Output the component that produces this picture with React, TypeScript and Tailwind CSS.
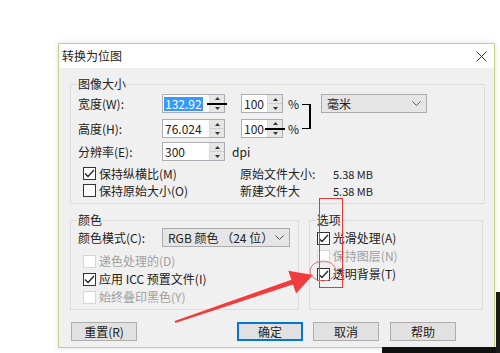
import React from 'react';

const Arrows: React.FC<{ dark?: boolean }> = ({ dark }) => (
    <div className="relative flex w-[15px] flex-col border-l border-[#d9d9d9] bg-[#e6e6e6]">
        <div className="flex flex-1 items-center justify-center">
            <svg width="5" height="3" viewBox="0 0 5 3"><path d="M0 3 L2.5 0 L5 3 Z" fill="#333" /></svg>
        </div>
        <div className={dark ? 'h-[2px] bg-black -mx-[3px]' : 'h-px bg-[#cfcfcf]'} />
        <div className="flex flex-1 items-center justify-center">
            <svg width="5" height="3" viewBox="0 0 5 3"><path d="M0 0 L2.5 3 L5 0 Z" fill="#333" /></svg>
        </div>
    </div>
);

const Spin: React.FC<{ value: string; className: string; selected?: boolean; dark?: boolean }> = ({ value, className, selected, dark }) => (
    <div className={`flex h-[19px] border border-[#abadb3] bg-white ${className}`}>
        <div className="flex flex-1 items-center pl-[1px]">
            <span className={selected ? 'bg-[#3399ff] px-[1px] text-white leading-[14px]' : 'px-[1px] leading-[14px]'}>{value}</span>
        </div>
        <Arrows dark={dark} />
    </div>
);

const Chevron = () => (
    <svg width="9" height="5" viewBox="0 0 9 5"><path d="M0.5 0.5 L4.5 4.5 L8.5 0.5" fill="none" stroke="#555" strokeWidth="1" /></svg>
);

const Select: React.FC<{ value: string; className: string }> = ({ value, className }) => (
    <div className={`flex h-[19px] items-center justify-between border border-[#acacac] bg-[#e5e5e5] pl-[5px] pr-[5px] ${className}`}>
        <span className="leading-[14px]">{value}</span>
        <Chevron />
    </div>
);

const Check: React.FC<{ checked?: boolean; disabled?: boolean; label: string }> = ({ checked, disabled, label }) => (
    <div className={`flex h-[18px] items-center ${disabled ? 'text-[#a0a0a0]' : 'text-[#222]'}`}>
        <div className={`flex h-[13px] w-[13px] items-center justify-center border bg-white ${disabled ? 'border-[#d6d6d6]' : 'border-[#333]'}`}>
            {checked && (
                <svg width="11" height="9" viewBox="0 0 11 9"><path d="M1 4.5 L4 7.5 L10 1" fill="none" stroke="#222" strokeWidth="1.3" /></svg>
            )}
        </div>
        <span className="ml-[3px] leading-[14px]">{label}</span>
    </div>
);

const Group: React.FC<{ title: string; className: string; children: React.ReactNode }> = ({ title, className, children }) => (
    <div className={`relative border border-[#dcdcdc] ${className}`}>
        <span className="absolute -top-[8px] left-[6px] bg-[#f0f0f0] px-[1px] leading-[14px] text-[#222]">{title}</span>
        {children}
    </div>
);

const Button: React.FC<{ label: string; className?: string; primary?: boolean }> = ({ label, className = '', primary }) => (
    <div className={`flex h-[19px] w-[66px] items-center justify-center bg-[#e1e1e1] leading-[14px] ${primary ? 'border-2 border-[#0078d7]' : 'border border-[#adadad]'} ${className}`}>
        {label}
    </div>
);

export default function App() {
    return (
        <div className="relative h-[353px] w-[500px] overflow-hidden bg-white font-['Microsoft_YaHei','Noto_Sans_CJK_SC',sans-serif] text-[12px] text-[#222]">
            <div className="ml-[58px] mt-[43px] flex h-[305px] w-[437px] flex-col border border-[#c6d08c] shadow-[0_0_6px_rgba(0,0,0,0.12)]">
                {/* Title bar */}
                <div className="flex h-[24px] items-center justify-between bg-white pl-[3px] pr-[7px]">
                    <span className="leading-[14px]">转换为位图</span>
                    <svg width="11" height="11" viewBox="0 0 11 11"><path d="M0.5 0.5 L10.5 10.5 M10.5 0.5 L0.5 10.5" stroke="#333" strokeWidth="1" /></svg>
                </div>

                {/* Body */}
                <div className="flex-1 bg-[#f0f0f0] px-[11px] pt-[16px]">
                    <Group title="图像大小" className="h-[120px] w-[415px]">
                        <div className="pl-[7px] pt-[9px]">
                            <div className="flex">
                                <div className="flex flex-col gap-[6px]">
                                    <div className="flex h-[19px] items-center">
                                        <span className="w-[84px] leading-[14px]">宽度(W):</span>
                                        <Spin value="132.92" className="w-[63px]" selected dark />
                                        <Spin value="100" className="ml-[16px] w-[42px]" />
                                        <span className="ml-[5px]">%</span>
                                    </div>
                                    <div className="flex h-[19px] items-center">
                                        <span className="w-[84px] leading-[14px]">高度(H):</span>
                                        <Spin value="76.024" className="w-[63px]" />
                                        <Spin value="100" className="ml-[16px] w-[42px]" dark />
                                        <span className="ml-[5px]">%</span>
                                    </div>
                                </div>
                                <div className="ml-[3px] mt-[10px] h-[25px] w-[9px] border-y-[1.5px] border-r-2 border-black" />
                                <Select value="毫米" className="ml-[10px] w-[106px]" />
                            </div>
                            <div className="mt-[4px] flex h-[19px] items-center">
                                <span className="w-[84px] leading-[14px]">分辨率(E):</span>
                                <Spin value="300" className="w-[63px]" />
                                <span className="ml-[7px] leading-[14px]">dpi</span>
                            </div>
                            <div className="mt-[4px] flex flex-col">
                                <div className="flex h-[17px] items-center">
                                    <div className="w-[162px] pl-[5px]"><Check checked label="保持纵横比(M)" /></div>
                                    <span className="w-[93px] leading-[14px]">原始文件大小:</span>
                                    <span className="text-[11px] leading-[14px]">5.38 MB</span>
                                </div>
                                <div className="flex h-[17px] items-center">
                                    <div className="w-[162px] pl-[5px]"><Check label="保持原始大小(O)" /></div>
                                    <span className="w-[93px] leading-[14px]">新建文件大</span>
                                    <span className="text-[11px] leading-[14px]">5.38 MB</span>
                                </div>
                            </div>
                        </div>
                    </Group>

                    <div className="mt-[16px] flex gap-[10px]">
                        <Group title="颜色" className="h-[90px] w-[230px]">
                            <div className="pl-[7px] pt-[7px]">
                                <div className="flex h-[19px] items-center">
                                    <span className="w-[84px] leading-[14px]">颜色模式(C):</span>
                                    <Select value="RGB 颜色 （24 位）" className="w-[128px]" />
                                </div>
                                <div className="mt-[5px] pl-[5px]">
                                    <Check disabled label="递色处理的(D)" />
                                    <Check checked label="应用 ICC 预置文件(I)" />
                                    <Check disabled label="始终叠印黑色(Y)" />
                                </div>
                            </div>
                        </Group>
                        <Group title="选项" className="h-[90px] w-[175px]">
                            <div className="pl-[7px] pt-[8px]">
                                <Check checked label="光滑处理(A)" />
                                <Check disabled label="保持图层(N)" />
                                <Check checked label="透明背景(T)" />
                            </div>
                        </Group>
                    </div>

                    <div className="mt-[12px] flex">
                        <Button label="重置(R)" className="ml-[1px]" />
                        <Button label="确定" className="ml-[100px]" primary />
                        <Button label="取消" className="ml-[10px]" />
                        <Button label="帮助" className="ml-[11px]" />
                    </div>
                </div>
            </div>

            {/* annotations drawn over the screenshot */}
            <svg className="pointer-events-none absolute left-0 top-0" width="500" height="353" viewBox="0 0 500 353">
                <rect x="382" y="347" width="118" height="6" fill="#111" />
                <rect x="496" y="292" width="4" height="61" fill="#1a1a1a" />
                <rect x="319.5" y="198.5" width="23" height="89" fill="none" stroke="#e53935" strokeWidth="1" />
                <ellipse cx="323" cy="271" rx="13" ry="10" fill="none" stroke="#e57373" strokeWidth="1" />
                <polygon
                    points="174.7,321.1 291.4,279.7 288.3,270.7 313,275 296.1,293.5 293,284.5 175.3,322.9"
                    fill="#f03c3c"
                />
            </svg>
        </div>
    );
}
